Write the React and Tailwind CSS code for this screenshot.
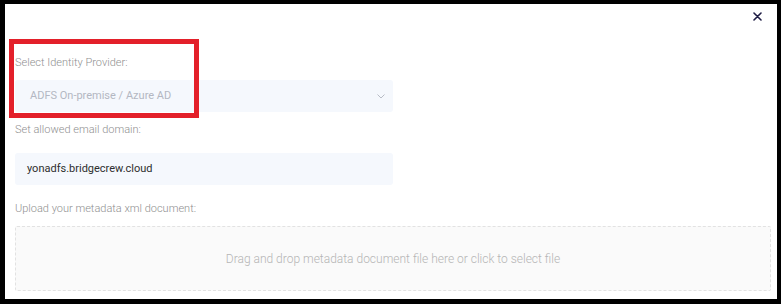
export default function App() {
  return (
    <div
      className="relative w-[781px] h-[304px] bg-black pt-[4px] pl-[5px] pr-[4px] pb-[5px]"
      style={{ fontFamily: "Roboto, 'Liberation Sans', sans-serif" }}
    >
      <div className="h-[295px] bg-white flex flex-col">
        <div className="flex justify-end pt-[8px] pr-[15px]">
          <svg width="9" height="9" viewBox="0 0 9 9" className="text-[#1f1d45]">
            <path d="M1 1 L8 8 M8 1 L1 8" stroke="currentColor" strokeWidth="1.6" strokeLinecap="round" />
          </svg>
        </div>

        <div className="flex flex-col pl-[10px] pr-[6px]">
          <label className="mt-[35px] text-[11px] leading-[14px] font-light text-[#8f8f8f]">
            Select Identity Provider:
          </label>
          <div className="mt-[10px] w-[378px] h-[32px] rounded-[3px] bg-[#f5f8fd] flex items-center justify-between pl-[15px] pr-[8px]">
            <span className="text-[11px] text-[#b3b7c2]">ADFS On-premise / Azure AD</span>
            <svg width="8" height="5" viewBox="0 0 8 5">
              <path d="M0.5 0.5 L4 4 L7.5 0.5" fill="none" stroke="#b8bcc6" strokeWidth="1" />
            </svg>
          </div>

          <label className="mt-[11px] text-[11px] leading-[14px] font-light text-[#8f8f8f]">
            Set allowed email domain:
          </label>
          <div className="mt-[16px] w-[378px] h-[32px] rounded-[3px] bg-[#f5f8fd] flex items-center pl-[12px]">
            <span className="text-[11px] text-[#2e2e2e]">yonadfs.bridgecrew.cloud</span>
          </div>

          <label className="mt-[17px] text-[11px] leading-[14px] font-light text-[#8f8f8f]">
            Upload your metadata xml document:
          </label>
          <div className="mt-[10px] h-[65px] rounded-[2px] border border-dashed border-[#e2e2e2] bg-[#fafafa] flex items-center justify-center">
            <span className="text-[12px] font-light text-[#b5b5b5]">
              Drag and drop metadata document file here or click to select file
            </span>
          </div>
        </div>
      </div>

      <div className="absolute left-[9px] top-[39px] w-[190px] h-[79px] border-[5px] border-[#e3202a] pointer-events-none" />
    </div>
  );
}
